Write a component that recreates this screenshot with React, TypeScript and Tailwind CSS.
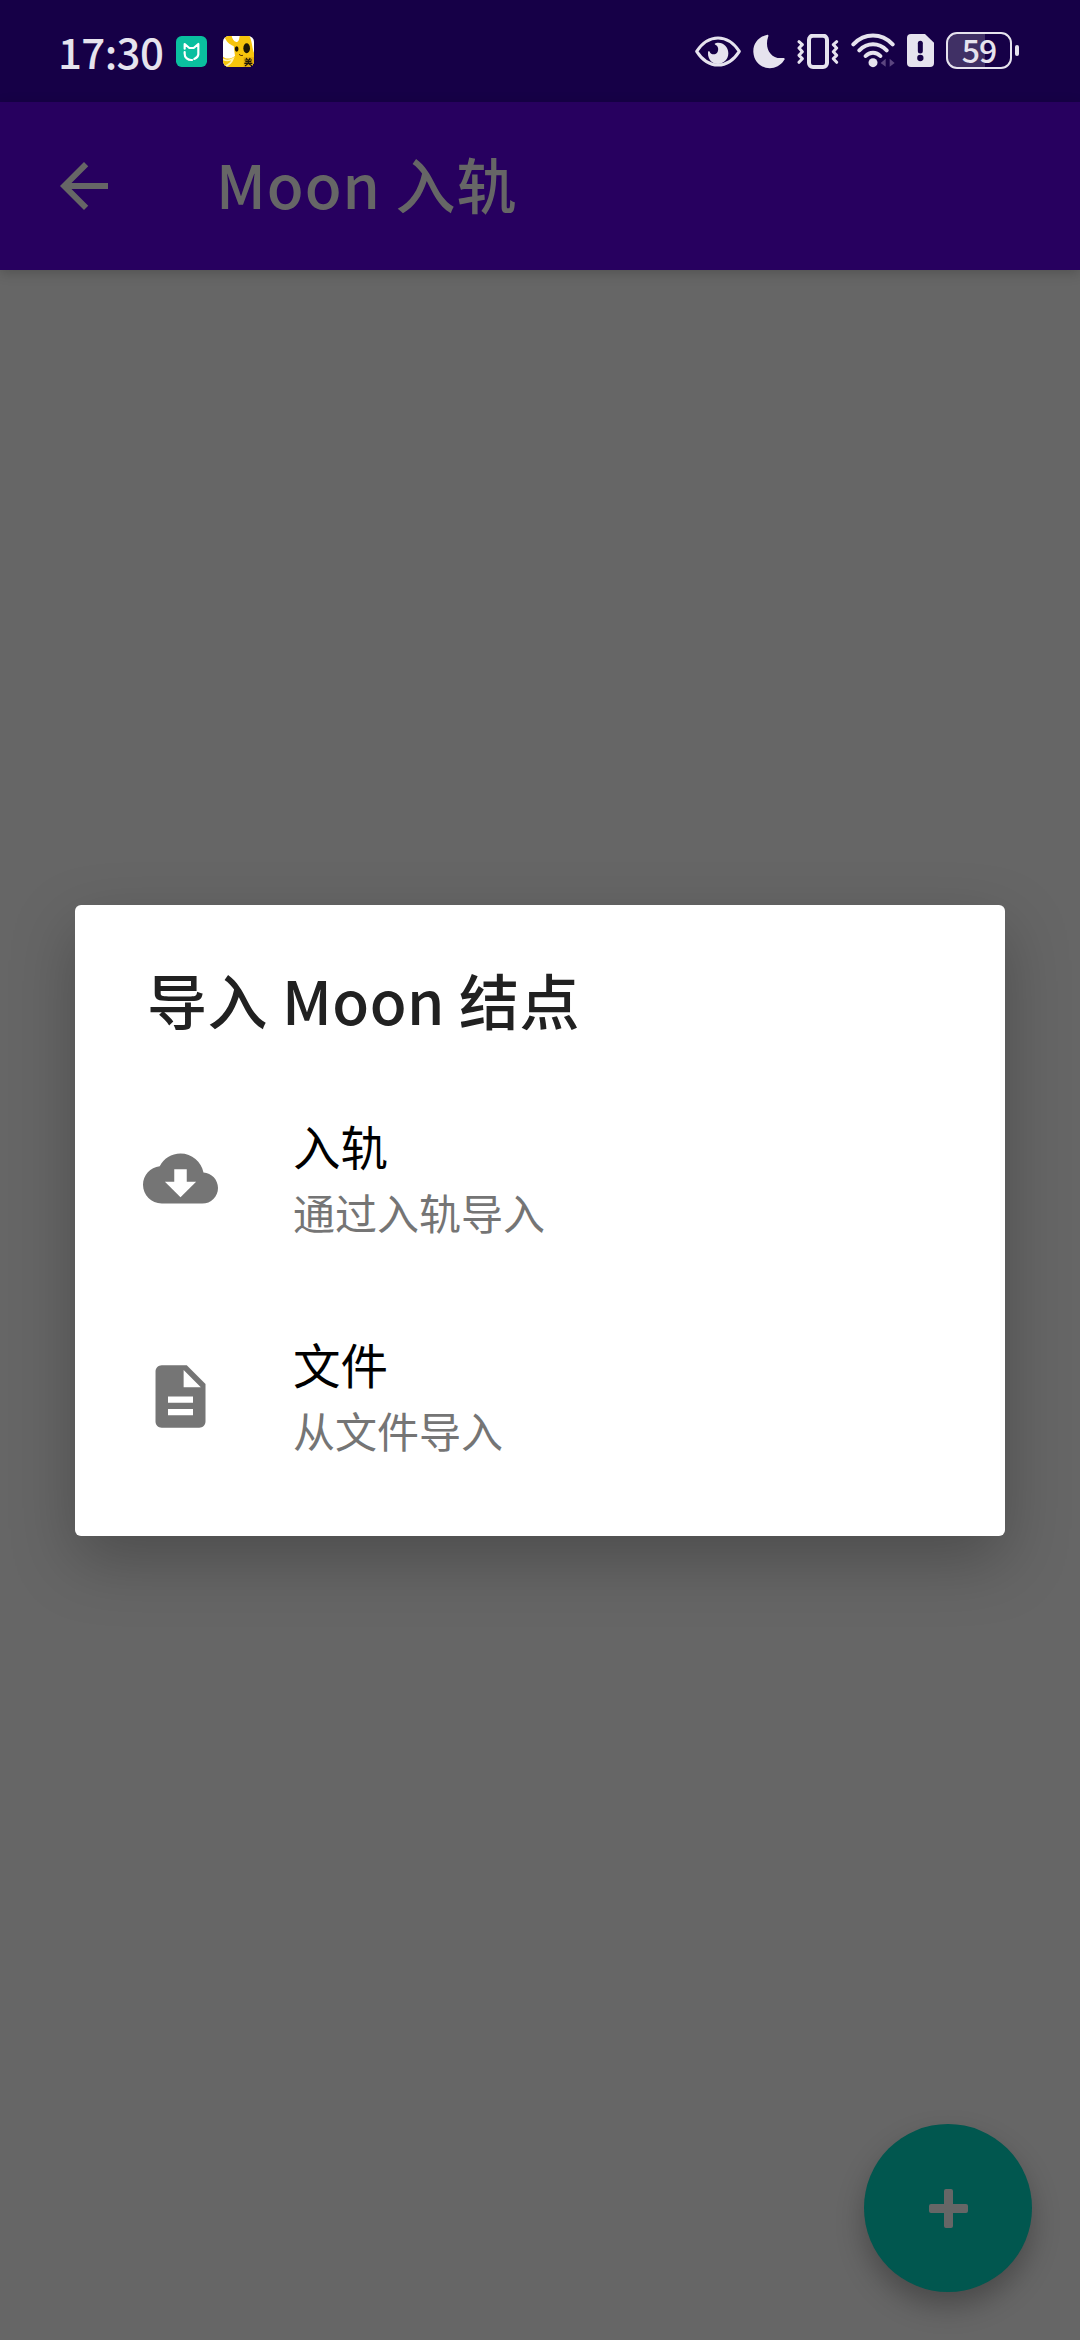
import React from "react";

function StatusBar() {
  return (
    <div className="flex h-[102px] w-full items-start bg-[#160047] text-[#e6e3ee]">
      <div className="mt-[29px] ml-[58px] w-[118px] shrink-0 whitespace-nowrap text-[42px] leading-[43px] font-medium tracking-[-0.6px]">
        17:30
      </div>
      {/* Home app notification */}
      <svg className="mt-[36px] h-[31px] w-[31px] shrink-0" viewBox="0 0 93 93">
        <rect width="93" height="93" rx="17" fill="#0abf9f" />
        <path d="M26 38V24l14 12h13l14-12v31a21 17 0 0 1-12 14" fill="none" stroke="#fff" strokeWidth="6.5" strokeLinejoin="round" strokeLinecap="round" />
        <path d="M26 48v5a20 18 0 0 0 22 19" fill="none" stroke="#fff" strokeWidth="6.5" strokeLinecap="round" />
      </svg>
      {/* Delivery app notification */}
      <svg className="mt-[36px] ml-[16px] h-[31px] w-[31px] shrink-0" viewBox="0 0 93 93">
        <defs>
          <clipPath id="tile">
            <rect width="93" height="93" rx="17" />
          </clipPath>
        </defs>
        <g clipPath="url(#tile)">
          <rect width="93" height="93" fill="#fff" />
          <path d="M4 0C8 16 20 26 32 30L36 60C22 70 10 70 0 62V93H93V50C88 40 88 20 80 0H50C48 14 46 18 40 18 32 16 28 8 26 0Z" fill="#f6c40c" />
          <path d="M0 70Q14 78 30 68Q24 84 8 90" fill="none" stroke="#fff2b0" strokeWidth="5" />
          <ellipse cx="41" cy="39" rx="5.5" ry="8" fill="#1c1606" />
          <ellipse cx="71" cy="37" rx="10" ry="15" fill="#1c1606" />
          <path d="M48 55q6 6 12 3" fill="none" stroke="#57320a" strokeWidth="3" />
          <path d="M62 64H93V93H62Z" fill="#e0a90c" />
          <path d="M69 66l4 5M82 66l-4 5M65 72H87M67 77H85M64 82H88M76 71V82L66 90M76 82L87 90" fill="none" stroke="#1c1606" strokeWidth="3.4" />
        </g>
      </svg>

      <svg className="mt-[36px] ml-[441px] h-[31px] w-[46px] shrink-0" viewBox="0 0 138 93">
        <path d="M5 46C23 19 44 6 69 6s46 13 64 40C115 74 94 87 69 87S23 74 5 46Z" fill="none" stroke="currentColor" strokeWidth="9" strokeLinejoin="round" />
        <path d="M62 22C80 16 100 30 100 52 100 70 86 84 69 84 52 84 38 70 39 50 39 46 42 42 44 47 48 57 63 58 68 47 72 37 68 29 61 26 58 24 59 23 62 22Z" fill="currentColor" />
      </svg>
      <svg className="mt-[34px] ml-[12px] h-[35px] w-[32px] shrink-0" viewBox="0 0 96 105">
        <path d="M41 3C47 0 47 5 45 10 34 43 54 76 88 72 95 71 97 74 93 79 68 119 4 107 1 54 0 28 17 9 41 3Z" fill="currentColor" />
      </svg>
      <svg className="mt-[34px] ml-[12px] h-[35px] w-[42px] shrink-0" viewBox="0 0 126 105">
        <rect x="36" y="5" width="54" height="94" rx="12" fill="none" stroke="currentColor" strokeWidth="12" />
        <path d="M6 23l10 9-10 10 10 11-10 11 10 10-10 11M119 23l-10 9 10 10-10 11 10 11-10 10 10 11" fill="none" stroke="currentColor" strokeWidth="9" strokeLinecap="round" strokeLinejoin="round" />
      </svg>
      <svg className="mt-[33px] ml-[12px] h-[35px] w-[44px] shrink-0" viewBox="0 0 132 105">
        <path d="M7 34C41 -1 91 -1 125 34M25 52C49 28 83 28 107 52M44 69C56 56 76 56 88 69" fill="none" stroke="currentColor" strokeWidth="12" strokeLinecap="round" />
        <circle cx="66" cy="89" r="13.5" fill="currentColor" />
        <path d="M104 77V101L89 90ZM116 77V101L131 90Z" fill="#5c4580" />
      </svg>
      <svg className="mt-[34px] ml-[12px] h-[33px] w-[27px] shrink-0" viewBox="0 0 81 99">
        <path d="M12 0H54L81 26V87Q81 99 69 99H12Q0 99 0 87V12Q0 0 12 0Z" fill="currentColor" />
        <path d="M40 28V51" stroke="#160047" strokeWidth="15" strokeLinecap="round" />
        <circle cx="40" cy="72" r="9.5" fill="#160047" />
      </svg>
      <div className="mt-[32px] ml-[12px] flex h-[37px] w-[66px] shrink-0 items-center justify-center rounded-[11px] border-2 border-[#e6e3ee] bg-linear-to-r from-[#403065] from-59% to-[#160047] to-59%">
        <span className="pb-[4px] text-[32px] leading-[32px] font-medium tracking-[-1px]">59</span>
      </div>
      <div className="mt-[45px] ml-[3px] h-[11px] w-[4px] shrink-0 rounded-[2px] bg-[#e6e3ee]" />
    </div>
  );
}

function AppBar() {
  return (
    <div className="flex h-[168px] w-full items-center bg-[#27005f] text-[#666666] shadow-[0_3px_12px_rgba(0,0,0,0.2)]">
      <svg className="ml-[48px] h-[72px] w-[72px] shrink-0" viewBox="0 0 24 24" fill="currentColor">
        <path d="M20 11H7.83l5.59-5.59L12 4l-8 8 8 8 1.41-1.41L7.83 13H20v-2z" />
      </svg>
      <h1 className="ml-[96px] pb-[6px] text-[60px] leading-[80px] font-medium tracking-[1px] whitespace-nowrap">Moon 入轨</h1>
    </div>
  );
}

function Row({ path, title, subtitle }: { path: string; title: string; subtitle: string }) {
  return (
    <div className="flex h-[218px] items-center pl-[68px]">
      <svg className="mb-[2px] h-[75px] w-[75px] shrink-0" viewBox="0 0 24 24" fill="#757575">
        <path d={path} />
      </svg>
      <div className="ml-[75px] flex flex-col">
        <div className="text-[47.5px] leading-[65px] text-black">{title}</div>
        <div className="text-[42px] leading-[67px] text-[#757575]">{subtitle}</div>
      </div>
    </div>
  );
}

function Dialog() {
  return (
    <div className="absolute top-[905px] left-[75px] h-[631px] w-[930px] rounded-[6px] bg-white shadow-[0_24px_64px_rgba(0,0,0,0.25)]">
      <h2 className="flex h-[165px] items-end pl-[72px] text-[60px] leading-[143px] font-medium tracking-[0.5px] whitespace-nowrap text-[#212121]">
        导入 Moon 结点
      </h2>
      <Row
        title="入轨"
        subtitle="通过入轨导入"
        path="M19.35 10.04C18.67 6.59 15.64 4 12 4 9.11 4 6.6 5.64 5.35 8.04 2.34 8.36 0 10.91 0 14c0 3.31 2.69 6 6 6h13c2.76 0 5-2.24 5-5 0-2.64-2.05-4.78-4.65-4.96zM17 13l-5 5-5-5h3V9h4v4h3z"
      />
      <Row
        title="文件"
        subtitle="从文件导入"
        path="M14 2H6c-1.1 0-1.99.9-1.99 2L4 20c0 1.1.89 2 1.99 2H18c1.1 0 2-.9 2-2V8l-6-6zm2 16H8v-2h8v2zm0-4H8v-2h8v2zm-3-5V3.5L18.5 9H13z"
      />
    </div>
  );
}

export default function App() {
  return (
    <div className="relative h-[2340px] w-[1080px] overflow-hidden bg-[#666666] font-['Noto_Sans_CJK_SC',sans-serif]">
      <StatusBar />
      <AppBar />
      <Dialog />
      <button className="absolute right-[48px] bottom-[48px] flex h-[168px] w-[168px] items-center justify-center rounded-full bg-[#01574f] shadow-[0_14px_28px_rgba(0,0,0,0.28)]">
        <svg className="h-[39px] w-[39px]" viewBox="0 0 39 39" fill="#666666">
          <path d="M17 0h5q2 0 2 2v13h13q2 0 2 2v5q0 2-2 2H24v13q0 2-2 2h-5q-2 0-2-2V24H2q-2 0-2-2v-5q0-2 2-2h13V2q0-2 2-2Z" />
        </svg>
      </button>
    </div>
  );
}
